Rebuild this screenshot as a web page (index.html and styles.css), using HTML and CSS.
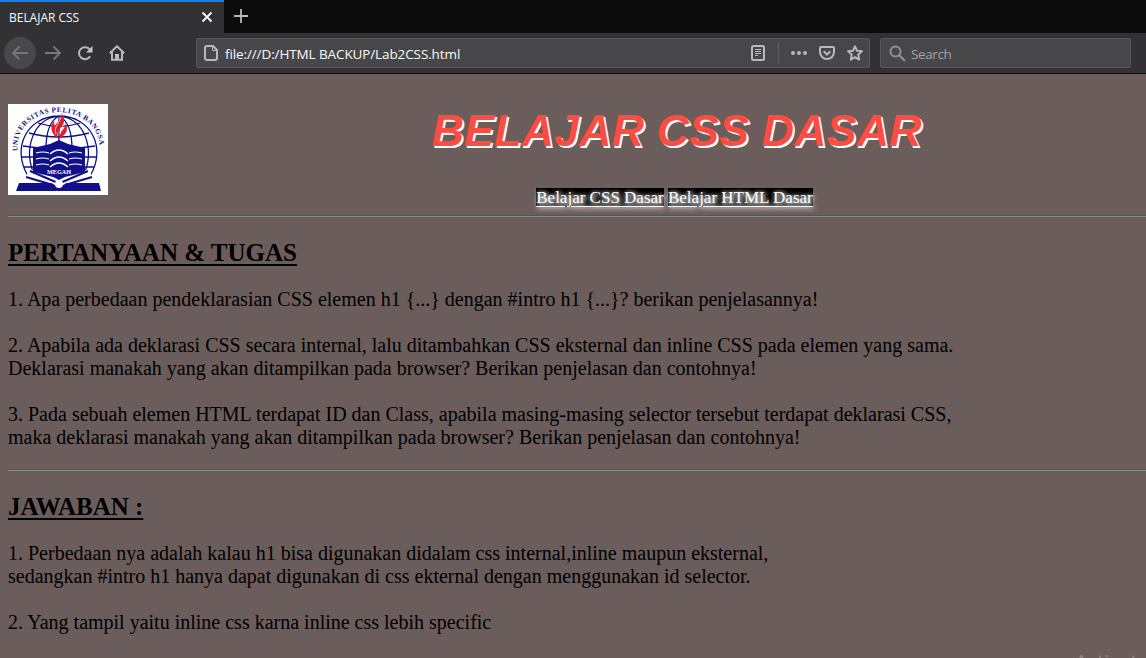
FILE: index.html
```html
<!DOCTYPE html>
<html lang="id">
<head>
<meta charset="utf-8">
<title>BELAJAR CSS</title>
<link rel="stylesheet" href="styles.css">
</head>
<body>
<div class="window">
  <div class="tabs">
    <div class="tab"><span class="tab-title">BELAJAR CSS</span>
      <svg class="close" width="12" height="12" viewBox="0 0 12 12"><path d="M1.500 1.500l9 9M10.500 1.500l-9 9" stroke="#f9f9fa" stroke-width="1.800"/></svg>
    </div>
    <svg class="plus" width="14" height="14" viewBox="0 0 14 14"><path d="M7 0v14M0 7h14" stroke="#b8b8bb" stroke-width="1.800"/></svg>
  </div>
  <div class="toolbar">
    <div class="nav">
      <span class="back"><svg width="16" height="16" viewBox="0 0 16 16"><path d="M16 8H1.500M7.500 1.500L1 8l6.500 6.500" class="dim"/></svg></span>
      <svg width="16" height="16" viewBox="0 0 16 16"><path d="M0 8h14.500M8.500 1.500L15 8l-6.500 6.500" class="dim"/></svg>
      <svg width="16" height="16" viewBox="0 0 16 16"><path d="M13.200 11.200A6 6 0 1 1 12.800 4.500" class="line"/><path d="M15.500 1v6.500H9z" fill="#c4c4c6"/></svg>
      <svg width="16" height="16" viewBox="0 0 16 16"><path d="M.8 8.300L8 1.300l7.200 7M3 7v7.800h10V7M7 15v-4.500h2V15" class="line"/><path d="M6 9h4v2H6z" fill="#c4c4c6"/></svg>
    </div>
    <div class="field url">
      <svg width="14" height="16" viewBox="0 0 14 16"><path d="M3 1h6l4 4v8a2 2 0 0 1-2 2H3a2 2 0 0 1-2-2V3a2 2 0 0 1 2-2z" class="line"/><path d="M8.500 1v4.500H13" class="thin"/></svg>
      <span class="address">file:///D:/HTML BACKUP/Lab2CSS.html</span>
      <svg class="reader" width="14" height="16" viewBox="0 0 14 16"><rect x="1" y="1" width="12" height="14" rx="1.500" class="line"/><path d="M4 4.500h6M4 6.500h6M4 8.500h6M4 10.500h3" class="thin"/></svg>
      <span class="divider"></span>
      <svg width="16" height="16" viewBox="0 0 16 16" fill="#b7b7b9"><circle cx="2" cy="8" r="2"/><circle cx="8" cy="8" r="2"/><circle cx="14" cy="8" r="2"/></svg>
      <svg class="pocket" width="16" height="16" viewBox="0 0 16 16"><path d="M2 2h12q1 0 1 1v4a7 7 0 0 1-14 0V3q0-1 1-1z" class="line"/><path d="M4.700 6.200L8 9.500l3.300-3.300" class="line"/></svg>
      <svg class="star" width="16" height="16" viewBox="0 0 16 16"><path d="M8 1.300l2 4.400 4.900.6-3.600 3.300.9 5L8 12.200l-4.200 2.400.9-5L1.100 6.300 6 5.700z" class="line" stroke-linejoin="round"/></svg>
    </div>
    <div class="field search">
      <svg width="17" height="17" viewBox="0 0 17 17"><circle cx="6.500" cy="6.500" r="5" fill="none" stroke="#919193" stroke-width="2"/><path d="M10 10l6 6" stroke="#919193" stroke-width="2.200"/></svg>
      <span>Search</span>
    </div>
  </div>
  <main class="page">
    <header class="header">
      <svg class="logo" width="100" height="91" viewBox="0 0 100 91">
        <path d="M0 0h100v91H0z" fill="#fff"/>
        <defs><path id="arc" d="M9.500 47C6 -5 95 -5 91.500 48"/></defs>
        <text class="logo-name"><textPath href="#arc" textLength="122">UNIVERSITAS PELITA BANGSA</textPath></text>
        <g fill="none" stroke="#10108a" stroke-width="1.300">
          <path d="M20 72C3 44 19 12 51 12s48 32 31 60M27 73C14 44 26 14 51 12c25 2 37 32 24 61M38 45C38 30 41 17 51 12c10 5 13 18 13 33M51 12v28"/>
          <path d="M30 19q21 7 42 0M21 29q30 8 60 0M15 42q36 6 72 0M14 53h15m44 0h15M16 63h12m46 0h12"/>
        </g>
        <path d="M14 79L22 65l29 12 29-12 8 14z" fill="#fff"/>
        <path d="M22 67l28 12M80 67L52 79M18 73l27 8M84 73l-27 8" fill="none" stroke="#10108a" stroke-width="2.200"/>
        <path d="M25 44l17-4 9-4 9 4 17 4v24l-20 5-6 3-6-3-20-5z" fill="#10108a"/>
        <g fill="none" stroke="#fff" stroke-width="1.200"><path d="M28 49q7-2 13 0M42 50q9-8 18 0M61 49q6-2 13 0M28 55q7-2 13 0M42 57q9-8 18 0M61 55q6-2 13 0M28 61q7-2 13 0M42 63q9-8 18 0M61 61q6-2 13 0"/></g>
        <text x="51" y="70" class="motto" textLength="24" lengthAdjust="spacingAndGlyphs">MEGAH</text>
        <path d="M11 79h32q8 5 16 0h32l2 8H8z" fill="#10108a"/><circle cx="51" cy="80" r="4" fill="#fff"/>
        <path d="M53 9c4 7-11 11-7 21 1 3 3 4 5 5-5-8 5-12 5-18 0-4-1-6-3-8z" fill="#e51c25"/>
        <path d="M57 18c3 6-7 9-5 16 7-4 9-9 5-16zM46 17c-5 6-2 12 1 15-1-6 0-9-1-15z" fill="#e51c25"/>
        <path d="M52 13c1 6-7 9-4 17M56 20q-5 6-4 10" fill="none" stroke="#fff" stroke-width=".7"/>
      </svg>
      <div class="heading">
        <h1>BELAJAR CSS DASAR</h1>
        <nav class="links"><a href="#css">Belajar CSS Dasar</a> <a href="#html">Belajar HTML Dasar</a></nav>
      </div>
    </header>
    <hr>
    <section id="css">
      <h2>PERTANYAAN &amp; TUGAS</h2>
      <p>1. Apa perbedaan pendeklarasian CSS elemen h1 {...} dengan #intro h1 {...}? berikan penjelasannya!</p>
      <p>2. Apabila ada deklarasi CSS secara internal, lalu ditambahkan CSS eksternal dan inline CSS pada elemen yang sama.<br>Deklarasi manakah yang akan ditampilkan pada browser? Berikan penjelasan dan contohnya!</p>
      <p>3. Pada sebuah elemen HTML terdapat ID dan Class, apabila masing-masing selector tersebut terdapat deklarasi CSS,<br>maka deklarasi manakah yang akan ditampilkan pada browser? Berikan penjelasan dan contohnya!</p>
    </section>
    <hr>
    <section id="html">
      <h2>JAWABAN :</h2>
      <p>1. Perbedaan nya adalah kalau h1 bisa digunakan didalam css internal,inline maupun eksternal,<br>sedangkan #intro h1 hanya dapat digunakan di css ekternal dengan menggunakan id selector.</p>
      <p>2. Yang tampil yaitu inline css karna inline css lebih specific</p>
    </section>
  </main>
  <div class="activation">Activate</div>
</div>
</body>
</html>
```
FILE: styles.css
```css
* { box-sizing: border-box; }
body { margin: 0; }
svg { display: block; flex: none; }
.window { position: relative; width: 1146px; height: 658px; overflow: hidden; background: #6b5d5b; }
.tabs { display: flex; height: 33px; background: #0c0c0d; }
.tab { display: flex; align-items: center; justify-content: space-between; width: 224px; padding: 0 11px 1px 9px; border-top: 2px solid #0a84ff; background: #323234; color: #f9f9fa; font: 12px "Open Sans", sans-serif; }
.tab-title { letter-spacing: -.02px; }
.plus { margin: 9px 0 0 10px; }
.toolbar { display: flex; height: 41px; padding: 5px 15px 5px 4px; background: #323234; border-bottom: 1px solid #0c0c0d; }
.nav { display: flex; align-items: center; gap: 16px; width: 192px; }
.nav .back { display: flex; align-items: center; justify-content: center; width: 32px; height: 32px; margin-right: -7px; border-radius: 50%; background: #48484a; }
.dim { fill: none; stroke: #77777a; stroke-width: 1.8; }
.line { fill: none; stroke: #b9b9bb; stroke-width: 2; }
.thin { fill: none; stroke: #b9b9bb; stroke-width: 1; }
.field { display: flex; align-items: center; height: 30px; border: 1px solid #58585a; border-radius: 2px; background: #474749; font: 14px "Open Sans", sans-serif; }
.url { width: 674px; flex: none; padding: 0 6px 0 7px; color: #f9f9fa; }
.address { flex: 1; margin-left: 7px; padding-top: 1px; font-size: 13.5px; letter-spacing: -.11px; white-space: nowrap; }
.divider { width: 1px; height: 22px; margin: 0 12px 0 13px; background: #5b626d; }
.pocket, .star { margin-left: 12px; }
.search { width: 251px; flex: none; margin-left: 10px; padding-left: 8px; gap: 5px; color: #a3a3a5; font-size: 13.5px; letter-spacing: -.4px; }
.search span { padding-top: 1px; }
.page { padding: 30px 0 0 8px; color: #000; font: 20px/23px "Liberation Serif", serif; }
.header { display: flex; height: 111px; }
.heading { width: 939px; margin-left: 99px; text-align: center; }
.logo-name { fill: #10108a; font: bold 7.2px "Liberation Serif", serif; }
.motto { fill: #fff; font: bold 6px "Liberation Serif", serif; text-anchor: middle; }
h1 { margin: 0; color: #ff4c40; font: italic bold 45px/54px "Liberation Sans", sans-serif; text-shadow: 2px 2px #fff; }
.links { margin: 30px 4px 0 0; font-size: 17px; line-height: 20px; }
.links a { background: #000; color: #fff; text-shadow: 1px 1px 5px #fff, 1px 1px 5px #fff; text-underline-offset: 3px; }
hr { height: 2px; margin: 0; border: 0; border-top: 1px solid #555; border-bottom: 1px solid #888b89; }
section { height: 252px; padding-top: 21px; }
h2 { margin: 0; font-size: 25px; line-height: 29px; text-decoration: underline; text-decoration-thickness: 2px; text-underline-offset: 3px; }
p { margin: 21px 0 0; white-space: nowrap; }
p + p { margin-top: 23px; }
.activation { position: absolute; left: 1075px; top: 648px; color: #8e8583; font: 20px "Open Sans", sans-serif; }
```
